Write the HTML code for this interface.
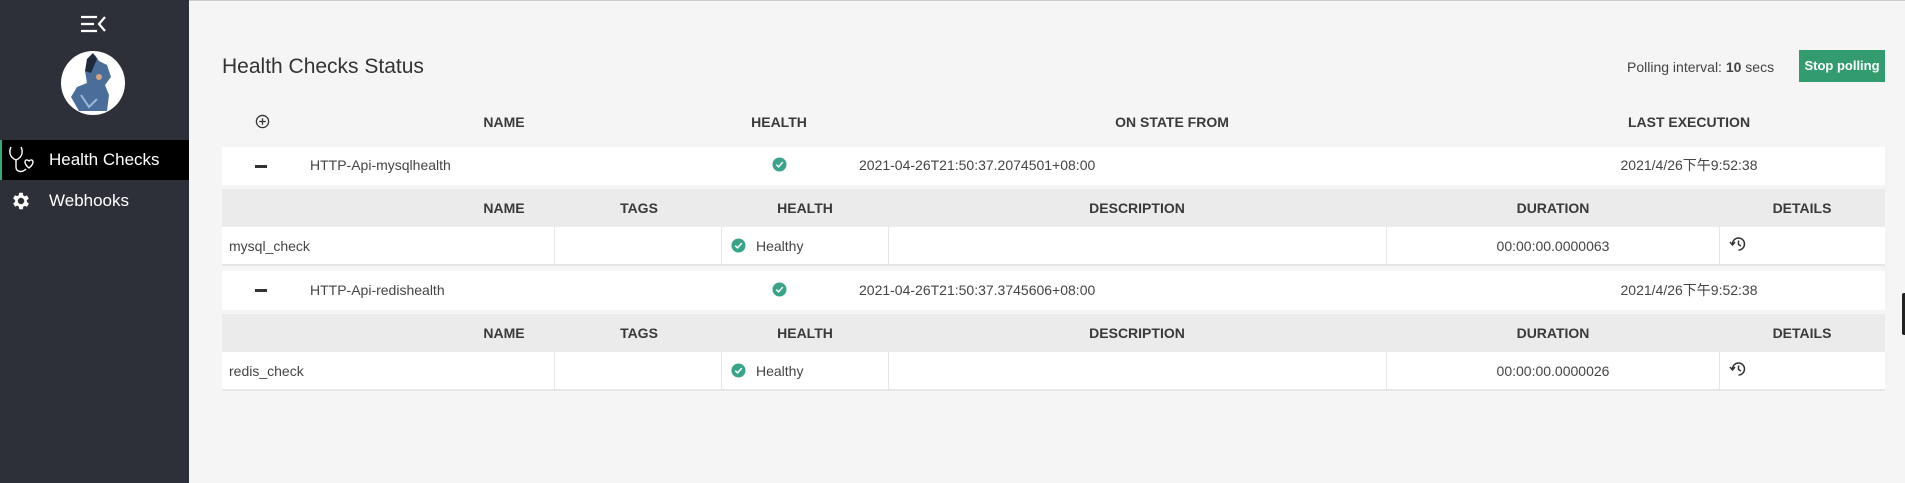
<!DOCTYPE html>
<html><head><meta charset="utf-8"><style>
*{margin:0;padding:0;box-sizing:border-box}
body{width:1905px;height:483px;overflow:hidden;background:#f5f5f5;font-family:"Liberation Sans","Noto Sans CJK SC",sans-serif;color:#444;position:relative;font-size:14px;line-height:17px}
.a{position:absolute}
.side{left:0;top:0;width:189px;height:483px;background:#2e3039}
.bar{height:38px;background:#fff}
.c{text-align:center}
.b{font-weight:bold;color:#3a3a3a}
</style></head><body>
<div class="a" style="left:0;top:0;width:1905px;height:1px;background:#ccc"></div>
<div class="a side">
 <svg class="a" style="left:80px;top:14px" width="28" height="20" viewBox="0 0 28 20"><g stroke="#fff" stroke-width="2.2" fill="none"><path d="M1 3H17M1 10H14M1 17H17"/><path d="M25 3L19 10L25 17"/></g></svg>
 <div class="a" style="left:61px;top:51px;width:64px;height:64px;border-radius:50%;background:#fff;overflow:hidden">
  <svg width="64" height="64" viewBox="0 0 64 64"><path d="M28 8L34 4L38 10L46 14L50 26L44 34L48 44L46 60L18 60L10 46L16 36L26 32L24 20Z" fill="#4a6e9a"/><path d="M26 8L32 2L36 8L30 22L24 20Z" fill="#1e2a3a"/><circle cx="38" cy="26" r="3" fill="#d9a07f"/><path d="M20 44L28 56L36 48" stroke="#9db7d8" stroke-width="2" fill="none"/></svg>
 </div>
 <div class="a" style="left:0;top:140px;width:189px;height:40px;background:#000;border-left:2px solid #3aa776"></div>
 <svg class="a" style="left:8px;top:145px" width="28" height="30" viewBox="0 0 28 30"><g stroke="#fff" stroke-width="1.4" fill="none"><path d="M3 2C1 6 1 12 8 15C15 12 15 6 13 2"/><path d="M8 15V22C8 27 14 28 18 24"/><path d="M21 16C19 14 17 15 17 17C17 20 21 23 21 23C21 23 25 20 25 17C25 15 23 14 21 16Z"/></g></svg>
 <div class="a" style="left:49px;top:150px;font-size:17px;line-height:20px;color:#fff">Health Checks</div>
 <svg class="a" style="left:10px;top:190px" width="22" height="22" viewBox="0 0 24 24"><path fill="#fff" d="M19.4 13a7.5 7.5 0 000-2l2.1-1.6-2-3.5-2.5 1a7 7 0 00-1.700-1L15 3h-4l-.4 2.7a7 7 0 00-1.700 1l-2.500-1-2 3.5L6.6 11a7.5 7.5 0 000 2l-2.100 1.6 2 3.5 2.500-1a7 7 0 001.700 1L11 21h4l.4-2.700a7 7 0 001.700-1l2.500 1 2-3.500zM13 15.5a3.5 3.5 0 110-7 3.5 3.5 0 010 7z" transform="translate(-1 0)"/></svg>
 <div class="a" style="left:49px;top:191px;font-size:17px;line-height:20px;color:#fff">Webhooks</div>
</div>
<div class="a" style="left:222px;top:54px;font-size:21px;line-height:25px;color:#333">Health Checks Status</div>
<div class="a" style="left:1627px;top:59px;font-size:14px;color:#444">Polling interval: <b>10</b> secs</div>
<div class="a" style="left:1799px;top:50px;width:86px;height:32px;background:#339c6e;color:#fff;font-size:13px;font-weight:bold;line-height:32px;text-align:center">Stop polling</div>
<svg class="a" style="left:255px;top:114px" width="15" height="15" viewBox="0 0 16 16"><circle cx="8" cy="8" r="6.5" stroke="#333" stroke-width="1.4" fill="none"/><path d="M8 4.5V11.5M4.5 8H11.5" stroke="#333" stroke-width="1.4"/></svg>
<div class="a b c" style="left:404px;top:114px;width:200px">NAME</div>
<div class="a b c" style="left:729px;top:114px;width:100px">HEALTH</div>
<div class="a b c" style="left:1072px;top:114px;width:200px">ON STATE FROM</div>
<div class="a b c" style="left:1589px;top:114px;width:200px">LAST EXECUTION</div>

<div class="a bar" style="left:222px;top:147px;width:1663px"></div>
<div class="a" style="left:255px;top:165px;width:12px;height:3px;background:#333"></div>
<div class="a" style="left:310px;top:157px">HTTP-Api-mysqlhealth</div>
<svg class="a" style="left:772px;top:157px" width="15" height="15" viewBox="0 0 16 16"><circle cx="8" cy="8" r="7.5" fill="#3aa48a"/><path d="M4.5 8.2L7 10.5L11.5 5.5" stroke="#fff" stroke-width="1.6" fill="none"/></svg>
<div class="a" style="left:859px;top:157px">2021-04-26T21:50:37.2074501+08:00</div>
<div class="a c" style="left:1589px;top:157px;width:200px">2021/4/26下午9:52:38</div>
<div class="a" style="left:222px;top:189px;width:1663px;height:38px;background:#ebebeb"></div>
<div class="a b c" style="left:404px;top:200px;width:200px">NAME</div>
<div class="a b c" style="left:589px;top:200px;width:100px">TAGS</div>
<div class="a b c" style="left:755px;top:200px;width:100px">HEALTH</div>
<div class="a b c" style="left:1037px;top:200px;width:200px">DESCRIPTION</div>
<div class="a b c" style="left:1453px;top:200px;width:200px">DURATION</div>
<div class="a b c" style="left:1752px;top:200px;width:100px">DETAILS</div>
<div class="a" style="left:222px;top:227px;width:1663px;height:39px;background:#fff;border-bottom:2px solid #e6e6e6"></div>
<div class="a" style="left:554px;top:227px;width:1px;height:38px;background:#e6e6e6"></div>
<div class="a" style="left:721px;top:227px;width:1px;height:38px;background:#e6e6e6"></div>
<div class="a" style="left:888px;top:227px;width:1px;height:38px;background:#e6e6e6"></div>
<div class="a" style="left:1386px;top:227px;width:1px;height:38px;background:#e6e6e6"></div>
<div class="a" style="left:1719px;top:227px;width:1px;height:38px;background:#e6e6e6"></div>
<div class="a" style="left:229px;top:238px">mysql_check</div>
<svg class="a" style="left:731px;top:238px" width="15" height="15" viewBox="0 0 16 16"><circle cx="8" cy="8" r="7.5" fill="#3aa48a"/><path d="M4.5 8.2L7 10.5L11.5 5.5" stroke="#fff" stroke-width="1.6" fill="none"/></svg>
<div class="a" style="left:756px;top:238px">Healthy</div>
<div class="a c" style="left:1453px;top:238px;width:200px">00:00:00.0000063</div>
<svg class="a" style="left:1729px;top:236px" width="17" height="16" viewBox="0 0 17 16"><g stroke="#333" stroke-width="1.5" fill="none"><path d="M3.5 8A6 6 0 1 1 9.5 14"/><path d="M1 6L3.5 9L6 6"/><path d="M9.5 4.5V8.5L12 10"/></g></svg>

<div class="a bar" style="left:222px;top:271px;width:1663px;height:39px"></div>
<div class="a" style="left:255px;top:289px;width:12px;height:3px;background:#333"></div>
<div class="a" style="left:310px;top:282px">HTTP-Api-redishealth</div>
<svg class="a" style="left:772px;top:282px" width="15" height="15" viewBox="0 0 16 16"><circle cx="8" cy="8" r="7.5" fill="#3aa48a"/><path d="M4.5 8.2L7 10.5L11.5 5.5" stroke="#fff" stroke-width="1.6" fill="none"/></svg>
<div class="a" style="left:859px;top:282px">2021-04-26T21:50:37.3745606+08:00</div>
<div class="a c" style="left:1589px;top:282px;width:200px">2021/4/26下午9:52:38</div>
<div class="a" style="left:222px;top:314px;width:1663px;height:38px;background:#ebebeb"></div>
<div class="a b c" style="left:404px;top:325px;width:200px">NAME</div>
<div class="a b c" style="left:589px;top:325px;width:100px">TAGS</div>
<div class="a b c" style="left:755px;top:325px;width:100px">HEALTH</div>
<div class="a b c" style="left:1037px;top:325px;width:200px">DESCRIPTION</div>
<div class="a b c" style="left:1453px;top:325px;width:200px">DURATION</div>
<div class="a b c" style="left:1752px;top:325px;width:100px">DETAILS</div>
<div class="a" style="left:222px;top:352px;width:1663px;height:39px;background:#fff;border-bottom:2px solid #e6e6e6"></div>
<div class="a" style="left:554px;top:352px;width:1px;height:38px;background:#e6e6e6"></div>
<div class="a" style="left:721px;top:352px;width:1px;height:38px;background:#e6e6e6"></div>
<div class="a" style="left:888px;top:352px;width:1px;height:38px;background:#e6e6e6"></div>
<div class="a" style="left:1386px;top:352px;width:1px;height:38px;background:#e6e6e6"></div>
<div class="a" style="left:1719px;top:352px;width:1px;height:38px;background:#e6e6e6"></div>
<div class="a" style="left:229px;top:363px">redis_check</div>
<svg class="a" style="left:731px;top:363px" width="15" height="15" viewBox="0 0 16 16"><circle cx="8" cy="8" r="7.5" fill="#3aa48a"/><path d="M4.5 8.2L7 10.5L11.5 5.5" stroke="#fff" stroke-width="1.6" fill="none"/></svg>
<div class="a" style="left:756px;top:363px">Healthy</div>
<div class="a c" style="left:1453px;top:363px;width:200px">00:00:00.0000026</div>
<svg class="a" style="left:1729px;top:361px" width="17" height="16" viewBox="0 0 17 16"><g stroke="#333" stroke-width="1.5" fill="none"><path d="M3.5 8A6 6 0 1 1 9.5 14"/><path d="M1 6L3.5 9L6 6"/><path d="M9.5 4.5V8.5L12 10"/></g></svg>

<div class="a" style="left:1902px;top:293px;width:3px;height:42px;background:#222;border-radius:2px 0 0 2px"></div>
</body></html>
